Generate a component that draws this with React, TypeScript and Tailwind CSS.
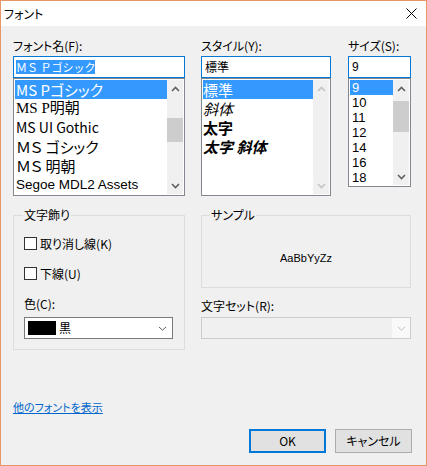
import React from 'react';

const UI = "font-['Noto_Sans_CJK_JP',sans-serif] [font-feature-settings:'palt']";

function Arrow({ down = false, disabled = false }: { down?: boolean; disabled?: boolean }) {
  return (
    <svg width="9" height="6" viewBox="0 0 9 6" className="block">
      <polyline
        points={down ? '1,1 4.5,4.5 8,1' : '1,5 4.5,1.5 8,5'}
        fill="none"
        stroke={disabled ? '#c4c4c4' : '#606060'}
        strokeWidth="1.6"
      />
    </svg>
  );
}

function ComboChevron({ disabled = false }: { disabled?: boolean }) {
  return (
    <svg width="9" height="5" viewBox="0 0 9 5" className="block">
      <polyline points="1,1 4.5,4.2 8,1" fill="none" stroke={disabled ? '#bfbfbf' : '#606060'} strokeWidth="1" />
    </svg>
  );
}

function ScrollBar({ thumb, disabled }: { thumb?: string; disabled?: boolean }) {
  return (
    <div className="flex w-[16px] shrink-0 flex-col bg-[#f0f0f0]">
      <div className="flex h-[17px] items-center justify-center">
        <Arrow disabled={disabled} />
      </div>
      <div className="flex-1">{thumb && <div className={`bg-[#cdcdcd] ${thumb}`} />}</div>
      <div className="flex h-[17px] items-center justify-center">
        <Arrow down disabled={disabled} />
      </div>
    </div>
  );
}

const fontItems = [
  { name: 'MS Pゴシック', cls: `${UI} text-[15px]` },
  { name: 'MS P明朝', cls: "font-['Liberation_Serif','Noto_Sans_CJK_JP',serif] text-[15px]" },
  { name: 'MS UI Gothic', cls: `${UI} text-[14px]` },
  { name: 'ＭＳ ゴシック', cls: "font-['Noto_Sans_CJK_JP',sans-serif] text-[15px]" },
  { name: 'ＭＳ 明朝', cls: "font-['Noto_Sans_CJK_JP',serif] text-[15px]" },
  { name: 'Segoe MDL2 Assets', cls: "font-['Liberation_Sans',sans-serif] text-[13.5px]" },
];

const styleItems = [
  { name: '標準', cls: '' },
  { name: '斜体', cls: 'italic' },
  { name: '太字', cls: 'font-bold' },
  { name: '太字 斜体', cls: 'font-bold italic' },
];

const sizes = ['9', '10', '11', '12', '14', '16', '18'];

function Checkbox({ label }: { label: string }) {
  return (
    <div className="flex h-[13px] items-center gap-[3px]">
      <div className="h-[13px] w-[13px] border border-[#333333] bg-white" />
      <span className="text-[12px] leading-[16px] text-black">{label}</span>
    </div>
  );
}

export default function App() {
  return (
    <div className={`flex h-[466px] w-[427px] flex-col border border-[#e8956a] bg-[#f0f0f0] text-black ${UI}`}>
      {/* Title bar */}
      <div className="flex h-[25px] shrink-0 items-center justify-between bg-white pl-[3px] pr-[9px]">
        <span className="text-[12px] leading-[16px]">フォント</span>
        <svg width="11" height="11" viewBox="0 0 11 11" className="block">
          <path d="M0.5 0.5 L10.5 10.5 M10.5 0.5 L0.5 10.5" stroke="#000" strokeWidth="1" />
        </svg>
      </div>

      <div className="flex flex-1 flex-col pl-[12px] pr-[14px] pt-[12px]">
        {/* Top lists */}
        <div className="flex items-start">
          {/* Font name */}
          <div className="flex w-[172px] flex-col">
            <div className="h-[16px] text-[12px] leading-[16px]">フォント名(F):</div>
            <div className="mt-[2px] flex h-[22px] items-center border border-[#0078d7] bg-white pl-[2px]">
              <span className="bg-[#3399ff] font-['Noto_Sans_CJK_JP',sans-serif] text-[11px] leading-[14px] text-white [font-feature-settings:normal]">
                ＭＳ Ｐゴシック
              </span>
            </div>
            <div className="flex h-[118px] border border-[#828790] bg-white p-[1px]">
              <div className="flex flex-1 flex-col">
                {fontItems.map((f, i) => (
                  <div
                    key={f.name}
                    className={`h-[19px] whitespace-nowrap pl-[1px] leading-[19px] ${f.cls} ${
                      i === 0 ? 'bg-[#3399ff] text-white' : 'text-black'
                    }`}
                  >
                    {f.name}
                  </div>
                ))}
              </div>
              <ScrollBar thumb="mt-[21px] h-[24px]" />
            </div>
          </div>

          {/* Style */}
          <div className="ml-[16px] flex w-[130px] flex-col">
            <div className="h-[16px] text-[12px] leading-[16px]">スタイル(Y):</div>
            <div className="mt-[2px] flex h-[22px] items-center border border-[#0078d7] bg-white pl-[3px] text-[12px]">
              標準
            </div>
            <div className="flex h-[118px] border border-[#828790] bg-white p-[1px]">
              <div className="flex flex-1 flex-col">
                {styleItems.map((s, i) => (
                  <div
                    key={s.name}
                    className={`h-[19px] whitespace-nowrap text-[15px] leading-[19px] ${s.cls} ${
                      i === 0 ? 'bg-[#3399ff] text-white' : 'text-black'
                    }`}
                  >
                    {s.name}
                  </div>
                ))}
              </div>
              <ScrollBar disabled />
            </div>
          </div>

          {/* Size */}
          <div className="ml-[17px] flex w-[63px] flex-col">
            <div className="h-[16px] text-[12px] leading-[16px]">サイズ(S):</div>
            <div className="mt-[2px] flex h-[22px] items-center border border-[#0078d7] bg-white pl-[3px] font-['Liberation_Sans',sans-serif] text-[12px]">
              9
            </div>
            <div className="flex h-[109px] border border-[#828790] bg-white p-[1px]">
              <div className="flex flex-1 flex-col">
                {sizes.map((s, i) => (
                  <div
                    key={s}
                    className={`h-[15px] pl-[2px] font-['Liberation_Sans',sans-serif] text-[13px] leading-[15px] ${
                      i === 0 ? 'bg-[#3399ff] text-white' : 'text-black'
                    }`}
                  >
                    {s}
                  </div>
                ))}
              </div>
              <ScrollBar thumb="mt-[4px] h-[31px]" />
            </div>
          </div>
        </div>

        {/* Groups */}
        <div className="mt-[19px] flex items-start">
          {/* Effects */}
          <div className="relative flex h-[135px] w-[172px] flex-col border border-[#dcdcdc] pb-[10px] pl-[10px] pt-[21px]">
            <span className="absolute left-[9px] top-[-9px] bg-[#f0f0f0] px-[1px] text-[12px] leading-[16px]">
              文字飾り
            </span>
            <Checkbox label="取り消し線(K)" />
            <div className="mt-[17px]">
              <Checkbox label="下線(U)" />
            </div>
            <div className="mt-[16px] h-[16px] text-[12px] leading-[16px]">色(C):</div>
            <div className="mt-[5px] flex h-[22px] w-[149px] items-center border border-[#7a7a7a] bg-white pl-[3px] pr-[5px]">
              <div className="h-[14px] w-[28px] bg-black" />
              <span className="ml-[3px] flex-1 text-[12px] leading-[16px]">黒</span>
              <ComboChevron />
            </div>
          </div>

          {/* Sample + charset */}
          <div className="ml-[16px] flex w-[210px] flex-col">
            <div className="relative flex h-[73px] items-center justify-center border border-[#dcdcdc] pt-[12px]">
              <span className="absolute left-[8px] top-[-9px] bg-[#f0f0f0] px-[1px] text-[12px] leading-[16px]">
                サンプル
              </span>
              <span className="font-['Liberation_Sans',sans-serif] text-[11px] leading-[14px]">AaBbYyZz</span>
            </div>
            <div className="mt-[10px] h-[16px] text-[12px] leading-[16px]">文字セット(R):</div>
            <div className="mt-[3px] flex h-[22px] border border-[#cccccc] bg-[#f0f0f0]">
              <div className="flex-1" />
              <div className="flex w-[18px] items-center justify-center bg-[#f9f9f9]">
                <ComboChevron disabled />
              </div>
            </div>
          </div>
        </div>

        {/* Link */}
        <div className="mt-[49px] h-[16px] text-[11px] leading-[16px] text-[#0066cc] underline">
          他のフォントを表示
        </div>

        {/* Buttons */}
        <div className="mt-[14px] flex justify-end gap-[9px]">
          <button className="flex h-[24px] w-[77px] items-center justify-center border-2 border-[#0078d7] bg-[#e1e1e1] text-[12px]">
            OK
          </button>
          <button className="flex h-[24px] w-[77px] items-center justify-center border border-[#adadad] bg-[#e1e1e1] text-[12px]">
            キャンセル
          </button>
        </div>
      </div>
    </div>
  );
}
